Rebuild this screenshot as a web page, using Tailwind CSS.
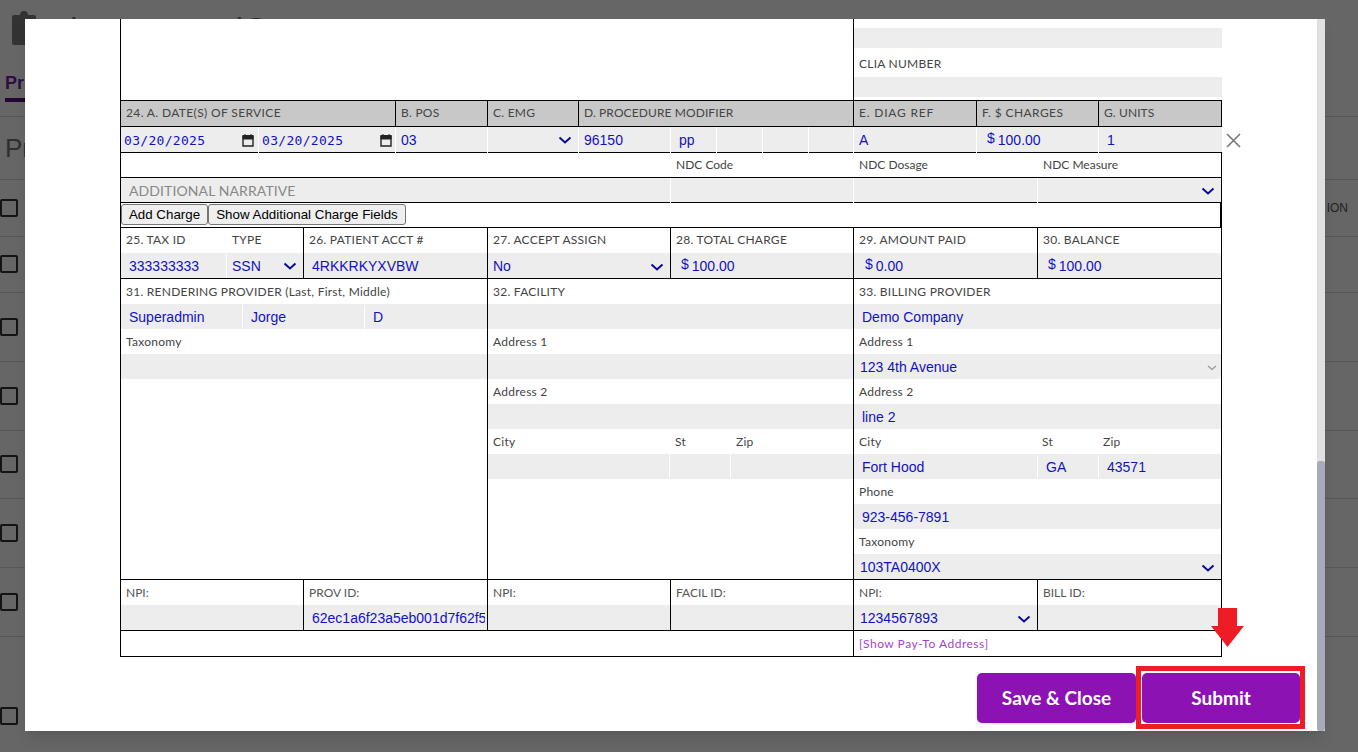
<!DOCTYPE html>
<html lang="en">
<head>
    <meta charset="UTF-8">
    <title>Claim Form</title>
    <script src="https://cdn.jsdelivr.net/npm/@tailwindcss/browser@4"></script>
</head>
<body class="relative h-[752px] overflow-hidden bg-white font-['Liberation_Sans',sans-serif]">
    <!-- page behind the modal -->
    <div class="h-[752px] w-[1358px] overflow-hidden">
        <div class="flex h-[60px] items-start pl-[12px] pt-[11px]">
            <svg width="24" height="34" viewBox="0 0 24 34"><path d="M2 4h6a4 4 0 0 1 8 0h6a2 2 0 0 1 2 2v26a2 2 0 0 1-2 2H2a2 2 0 0 1-2-2V6a2 2 0 0 1 2-2z" fill="#808080"/></svg>
            <span class="ml-[34px] mt-[-2px] text-[34px] leading-[40px] text-[#777]">l</span>
            <span class="ml-[158px] mt-[-2px] text-[34px] leading-[40px] text-[#777]">iQ</span>
        </div>
        <div class="h-[57px] border-b border-[#ddd] pl-[5px] pt-[12px]">
            <div class="inline-block h-[30px] border-b-4 border-[#5a0f86] text-[18px] leading-[22px] font-bold text-[#7a1fa8]">Primary</div>
        </div>
        <div class="h-[63px] border-b border-[#ddd] pl-[5px] pt-[14px] text-[26px] leading-[34px] text-[#777]">Pr</div>
        <div class="flex h-[57px] items-center justify-between border-b border-[#ddd]"><span class="size-[18px] rounded-[2px] border-2 border-[#333]"></span><span class="mr-[10px] text-[12px] text-[#555]">ION</span></div>
        <div class="flex h-[56px] items-center border-b border-[#ddd] pb-[1px]"><span class="size-[18px] rounded-[2px] border-2 border-[#333]"></span></div>
        <div class="flex h-[69px] items-center border-b border-[#ddd] pb-[1px]"><span class="size-[18px] rounded-[2px] border-2 border-[#333]"></span></div>
        <div class="flex h-[69px] items-center border-b border-[#ddd] pb-[1px]"><span class="size-[18px] rounded-[2px] border-2 border-[#333]"></span></div>
        <div class="flex h-[68px] items-center border-b border-[#ddd] pb-[1px]"><span class="size-[18px] rounded-[2px] border-2 border-[#333]"></span></div>
        <div class="flex h-[69px] items-center border-b border-[#ddd]"><span class="size-[18px] rounded-[2px] border-2 border-[#333]"></span></div>
        <div class="flex h-[69px] items-center border-b border-[#ddd]"><span class="size-[18px] rounded-[2px] border-2 border-[#333]"></span></div>
        <div class="flex h-[116px] items-end pb-[28px]"><span class="size-[18px] rounded-[2px] border-2 border-[#333]"></span></div>
    </div>

    <div class="absolute inset-0 bg-black/60"></div>

    <!-- modal -->
    <div class="absolute left-[25px] top-[19px] h-[712px] w-[1300px] overflow-hidden bg-white shadow-lg">
        <div class="ml-[95px] w-[1102px] border-l border-black font-['Lato',sans-serif] text-[12px] leading-[25px] tracking-[0.25px] text-[#444]">
            <!-- top remainder of the previous section -->
            <div class="flex h-[82px] border-b border-black">
                <div class="w-[733px] border-r border-black"></div>
                <div class="w-[368px]">
                    <div class="mt-[9px] h-[20px] bg-[#ededed]"></div>
                    <div class="h-[29px] pl-[5px] pt-[3px]">CLIA NUMBER</div>
                    <div class="h-[20px] bg-[#ededed]"></div>
                </div>
            </div>
            <!-- 24 header -->
            <div class="grid h-[26px] grid-cols-[275px_92px_91px_275px_123px_122px_123px] border-b border-black bg-[#c8c8c8] leading-[23px]">
                <div class="border-r border-black pl-[5px] tracking-[0.36px]">24. A. DATE(S) OF SERVICE</div>
                <div class="border-r border-black pl-[5px]">B. POS</div>
                <div class="border-r border-black pl-[5px]">C. EMG</div>
                <div class="border-r border-black pl-[5px] tracking-[0.1px]">D. PROCEDURE MODIFIER</div>
                <div class="border-r border-black pl-[5px] tracking-[0.8px]">E. DIAG REF</div>
                <div class="border-r border-black pl-[5px] tracking-[0.4px]">F. $ CHARGES</div>
                <div class="border-r border-black pl-[5px] tracking-[0.1px]">G. UNITS</div>
            </div>
            <!-- service line -->
            <div class="grid h-[26px] grid-cols-[137px_137px_92px_91px_92px_46px_46px_46px_45px_123px_122px_124px] border-b border-black bg-[#ededed] font-['Liberation_Sans',sans-serif] text-[14px] tracking-normal text-[#1212c4]">
                <div class="flex items-center justify-between pl-[3px] pr-[4px] font-['DejaVu_Sans_Mono',monospace] text-[13px] tracking-[0.3px]">03/20/2025
                    <svg width="12" height="14" viewBox="0 0 12 14"><path d="M1 3h10v10H1z" fill="none" stroke="#222" stroke-width="1.4"/><path d="M1 2.500h10V6H1zM3 1v2M9 1v2" fill="#222" stroke="#222"/></svg>
                </div>
                <div class="flex items-center justify-between border-l border-white pl-[3px] pr-[3px] font-['DejaVu_Sans_Mono',monospace] text-[13px] tracking-[0.3px]">03/20/2025
                    <svg width="12" height="14" viewBox="0 0 12 14"><path d="M1 3h10v10H1z" fill="none" stroke="#222" stroke-width="1.4"/><path d="M1 2.500h10V6H1zM3 1v2M9 1v2" fill="#222" stroke="#222"/></svg>
                </div>
                <div class="border-l border-white pl-[5px] pt-[1px]">03</div>
                <div class="flex items-center justify-end border-l border-white pr-[6px]">
                    <svg width="14" height="8" viewBox="0 0 14 8"><path d="M1.500 1.500 7 6.500l5.500-5" fill="none" stroke="#0a0a9a" stroke-width="2"/></svg>
                </div>
                <div class="border-l border-white pl-[5px] pt-[1px]">96150</div>
                <div class="border-l border-white pl-[8px] pt-[1px]">pp</div>
                <div class="border-l border-white"></div>
                <div class="border-l border-white"></div>
                <div class="border-l border-white"></div>
                <div class="border-l border-white pl-[5px] pt-[1px]">A</div>
                <div class="border-l border-white pl-[10px] pt-[1px]"><span class="relative top-[-2px] mr-[3px]">$</span>100.00</div>
                <div class="border-l border-white pl-[8px] pt-[1px]">1</div>
            </div>
            <!-- NDC labels -->
            <div class="grid h-[25px] grid-cols-[549px_183px_184px_185px] border-b border-black leading-[23px] tracking-normal">
                <div></div>
                <div class="pl-[6px]">NDC Code</div>
                <div class="pl-[6px]">NDC Dosage</div>
                <div class="border-r border-black pl-[6px]">NDC Measure</div>
            </div>
            <!-- narrative -->
            <div class="grid h-[25px] grid-cols-[549px_183px_184px_185px] border-b border-black bg-[#ededed]">
                <div class="pl-[8px] text-[14px] tracking-[0.1px] text-[#888]">ADDITIONAL NARRATIVE</div>
                <div class="border-l border-white"></div>
                <div class="border-l border-white"></div>
                <div class="flex items-center justify-end border-l border-r border-l-white border-r-black pr-[6px]">
                    <svg width="14" height="8" viewBox="0 0 14 8"><path d="M1.500 1.500 7 6.500l5.500-5" fill="none" stroke="#0a0a9a" stroke-width="2"/></svg>
                </div>
            </div>
            <!-- charge buttons -->
            <div class="flex h-[25px] items-start border-b border-r-2 border-black pt-[1px] font-['Liberation_Sans',sans-serif] text-[13.33px] leading-[19px] tracking-normal text-black">
                <button class="h-[21px] w-[87px] rounded-[3px] border border-[#767676] bg-[#efefef]">Add Charge</button>
                <button class="h-[21px] w-[198px] rounded-[3px] border border-[#767676] bg-[#efefef]">Show Additional Charge Fields</button>
            </div>
            <!-- 25 - 30 -->
            <div class="grid h-[51px] grid-cols-[183px_184px_183px_183px_184px_184px] border-b border-black">
                <div class="border-r border-black">
                    <div class="flex h-[25px] leading-[23px]"><span class="w-[106px] pl-[5px]">25. TAX ID</span><span class="pl-[5px]">TYPE</span></div>
                    <div class="flex h-[25px] bg-[#ededed] pt-[1px] font-['Liberation_Sans',sans-serif] text-[14px] tracking-normal text-[#1212c4]">
                        <div class="w-[105px] pl-[8px]">333333333</div>
                        <div class="flex flex-1 items-center justify-between border-l border-white pl-[5px] pr-[6px]">SSN
                            <svg width="14" height="8" viewBox="0 0 14 8"><path d="M1.500 1.500 7 6.500l5.500-5" fill="none" stroke="#0a0a9a" stroke-width="2"/></svg>
                        </div>
                    </div>
                </div>
                <div class="border-r border-black">
                    <div class="h-[25px] pl-[5px] leading-[23px]">26. PATIENT ACCT #</div>
                    <div class="h-[25px] bg-[#ededed] pl-[8px] pt-[1px] font-['Liberation_Sans',sans-serif] text-[14px] tracking-normal text-[#1212c4]">4RKKRKYXVBW</div>
                </div>
                <div class="border-r border-black">
                    <div class="h-[25px] pl-[5px] leading-[23px]">27. ACCEPT ASSIGN</div>
                    <div class="flex h-[25px] items-center justify-between bg-[#ededed] pl-[5px] pr-[6px] pt-[2px] font-['Liberation_Sans',sans-serif] text-[14px] tracking-normal text-[#1212c4]">No
                        <svg width="14" height="8" viewBox="0 0 14 8"><path d="M1.500 1.500 7 6.500l5.500-5" fill="none" stroke="#0a0a9a" stroke-width="2"/></svg>
                    </div>
                </div>
                <div class="border-r border-black">
                    <div class="h-[25px] pl-[5px] leading-[23px]">28. TOTAL CHARGE</div>
                    <div class="h-[25px] bg-[#ededed] pl-[10px] pt-[1px] font-['Liberation_Sans',sans-serif] text-[14px] tracking-normal text-[#1212c4]"><span class="relative top-[-2px] mr-[3px]">$</span>100.00</div>
                </div>
                <div class="border-r border-black">
                    <div class="h-[25px] pl-[5px] leading-[23px]">29. AMOUNT PAID</div>
                    <div class="h-[25px] bg-[#ededed] pl-[11px] pt-[1px] font-['Liberation_Sans',sans-serif] text-[14px] tracking-normal text-[#1212c4]"><span class="relative top-[-2px] mr-[3px]">$</span>0.00</div>
                </div>
                <div class="border-r border-black">
                    <div class="h-[25px] pl-[5px] leading-[23px]">30. BALANCE</div>
                    <div class="h-[25px] bg-[#ededed] pl-[10px] pt-[1px] font-['Liberation_Sans',sans-serif] text-[14px] tracking-normal text-[#1212c4]"><span class="relative top-[-2px] mr-[3px]">$</span>100.00</div>
                </div>
            </div>
            <!-- 31 - 33 -->
            <div class="grid h-[301px] grid-cols-[367px_366px_368px] border-b border-black">
                <div class="border-r border-black">
                    <div class="h-[25px] pl-[5px]">31. RENDERING PROVIDER (Last, First, Middle)</div>
                    <div class="flex h-[25px] bg-[#ededed] pt-[1px] font-['Liberation_Sans',sans-serif] text-[14px] tracking-normal text-[#1212c4]">
                        <div class="w-[121px] pl-[8px]">Superadmin</div>
                        <div class="w-[122px] border-l border-white pl-[8px]">Jorge</div>
                        <div class="flex-1 border-l border-white pl-[8px]">D</div>
                    </div>
                    <div class="h-[25px] pl-[5px]">Taxonomy</div>
                    <div class="h-[25px] bg-[#ededed]"></div>
                </div>
                <div class="border-r border-black">
                    <div class="h-[25px] pl-[5px]">32. FACILITY</div>
                    <div class="h-[25px] bg-[#ededed]"></div>
                    <div class="h-[25px] pl-[5px]">Address 1</div>
                    <div class="h-[25px] bg-[#ededed]"></div>
                    <div class="h-[25px] pl-[5px]">Address 2</div>
                    <div class="h-[25px] bg-[#ededed]"></div>
                    <div class="flex h-[25px]"><span class="w-[182px] pl-[5px]">City</span><span class="w-[61px] pl-[5px]">St</span><span class="pl-[5px]">Zip</span></div>
                    <div class="flex h-[25px] bg-[#ededed]">
                        <div class="w-[181px]"></div>
                        <div class="w-[61px] border-l border-white"></div>
                        <div class="flex-1 border-l border-white"></div>
                    </div>
                </div>
                <div class="border-r border-black">
                    <div class="h-[25px] pl-[5px]">33. BILLING PROVIDER</div>
                    <div class="h-[25px] bg-[#ededed] pl-[8px] pt-[1px] font-['Liberation_Sans',sans-serif] text-[14px] tracking-normal text-[#1212c4]">Demo Company</div>
                    <div class="h-[25px] pl-[5px]">Address 1</div>
                    <div class="flex h-[25px] items-center justify-between bg-[#ededed] pl-[6px] pr-[4px] pt-[2px] font-['Liberation_Sans',sans-serif] text-[14px] tracking-normal text-[#1212c4]">123 4th Avenue
                        <svg width="10" height="6" viewBox="0 0 10 6"><path d="M1 1l4 3.500L9 1" fill="none" stroke="#999" stroke-width="1.300"/></svg>
                    </div>
                    <div class="h-[25px] pl-[5px]">Address 2</div>
                    <div class="h-[25px] bg-[#ededed] pl-[8px] pt-[1px] font-['Liberation_Sans',sans-serif] text-[14px] tracking-normal text-[#1212c4]">line 2</div>
                    <div class="flex h-[25px]"><span class="w-[183px] pl-[5px]">City</span><span class="w-[61px] pl-[5px]">St</span><span class="pl-[5px]">Zip</span></div>
                    <div class="flex h-[25px] bg-[#ededed] pt-[1px] font-['Liberation_Sans',sans-serif] text-[14px] tracking-normal text-[#1212c4]">
                        <div class="w-[183px] pl-[8px]">Fort Hood</div>
                        <div class="w-[61px] border-l border-white pl-[8px]">GA</div>
                        <div class="flex-1 border-l border-white pl-[8px]">43571</div>
                    </div>
                    <div class="h-[25px] pl-[5px]">Phone</div>
                    <div class="h-[25px] bg-[#ededed] pl-[8px] pt-[1px] font-['Liberation_Sans',sans-serif] text-[14px] tracking-normal text-[#1212c4]">923-456-7891</div>
                    <div class="h-[25px] pl-[5px]">Taxonomy</div>
                    <div class="flex h-[25px] items-center justify-between bg-[#ededed] pl-[6px] pr-[6px] pt-[2px] font-['Liberation_Sans',sans-serif] text-[14px] tracking-normal text-[#1212c4]">103TA0400X
                        <svg width="14" height="8" viewBox="0 0 14 8"><path d="M1.500 1.500 7 6.500l5.500-5" fill="none" stroke="#0a0a9a" stroke-width="2"/></svg>
                    </div>
                </div>
            </div>
            <!-- NPI row -->
            <div class="grid h-[51px] grid-cols-[183px_184px_183px_183px_184px_184px] border-b border-black tracking-normal">
                <div class="border-r border-black">
                    <div class="h-[25px] pl-[5px] text-[#555]">NPI:</div>
                    <div class="h-[25px] bg-[#ededed]"></div>
                </div>
                <div class="border-r border-black">
                    <div class="h-[25px] pl-[5px] text-[#555]">PROV ID:</div>
                    <div class="h-[25px] overflow-hidden whitespace-nowrap bg-[#ededed] pl-[8px] pt-[1px] font-['Liberation_Sans',sans-serif] text-[14px] text-[#1212c4]"><div class="w-[173px] overflow-hidden">62ec1a6f23a5eb001d7f62f5</div></div>
                </div>
                <div class="border-r border-black">
                    <div class="h-[25px] pl-[5px] text-[#555]">NPI:</div>
                    <div class="h-[25px] bg-[#ededed]"></div>
                </div>
                <div class="border-r border-black">
                    <div class="h-[25px] pl-[5px] text-[#555]">FACIL ID:</div>
                    <div class="h-[25px] bg-[#ededed]"></div>
                </div>
                <div class="border-r border-black">
                    <div class="h-[25px] pl-[5px] text-[#555]">NPI:</div>
                    <div class="flex h-[25px] items-center justify-between bg-[#ededed] pl-[6px] pr-[6px] pt-[2px] font-['Liberation_Sans',sans-serif] text-[14px] text-[#1212c4]">1234567893
                        <svg width="14" height="8" viewBox="0 0 14 8"><path d="M1.500 1.500 7 6.500l5.500-5" fill="none" stroke="#0a0a9a" stroke-width="2"/></svg>
                    </div>
                </div>
                <div class="border-r border-black">
                    <div class="h-[25px] pl-[5px] text-[#555]">BILL ID:</div>
                    <div class="h-[25px] bg-[#ededed]"></div>
                </div>
            </div>
            <!-- pay-to -->
            <div class="grid h-[26px] grid-cols-[733px_368px] border-b border-black">
                <div class="border-r border-black"></div>
                <div class="border-r border-black pl-[5px] text-[12px] tracking-[0.5px] text-[#a63fd0]">[Show Pay-To Address]</div>
            </div>
        </div>

        <!-- footer buttons -->
        <div class="mt-[16px] flex justify-end gap-[6px] pr-[25px] font-['Lato',sans-serif] text-[19px] font-bold text-white">
            <button class="h-[50px] w-[159px] rounded-[5px] bg-[#8c12b4] shadow-sm">Save &amp; Close</button>
            <button class="h-[50px] w-[158px] rounded-[5px] bg-[#8c12b4]">Submit</button>
        </div>

        <!-- remove line button -->
        <svg class="absolute left-[1201px] top-[114px]" width="15" height="15" viewBox="0 0 15 15"><path d="M1 1l13 13M14 1 1 14" stroke="#777" stroke-width="1.600" fill="none"/></svg>

        <!-- scrollbar -->
        <div class="absolute right-0 top-0 h-full w-[8px] bg-[#e0e0e0]">
            <div class="absolute bottom-0 h-[270px] w-full rounded-[3px] bg-[#a9a9bc]"></div>
        </div>

        <!-- tutorial annotation -->
        <div class="absolute left-[1111px] top-[647px] h-[63px] w-[169px] border-[5px] border-[#ee1c25]"></div>
        <svg class="absolute left-[1186px] top-[589px]" width="33" height="39" viewBox="0 0 33 39"><path d="M7 0h19v18h7L16.500 39 0 18h7z" fill="#ee1c25"/></svg>
    </div>
</body>
</html>
